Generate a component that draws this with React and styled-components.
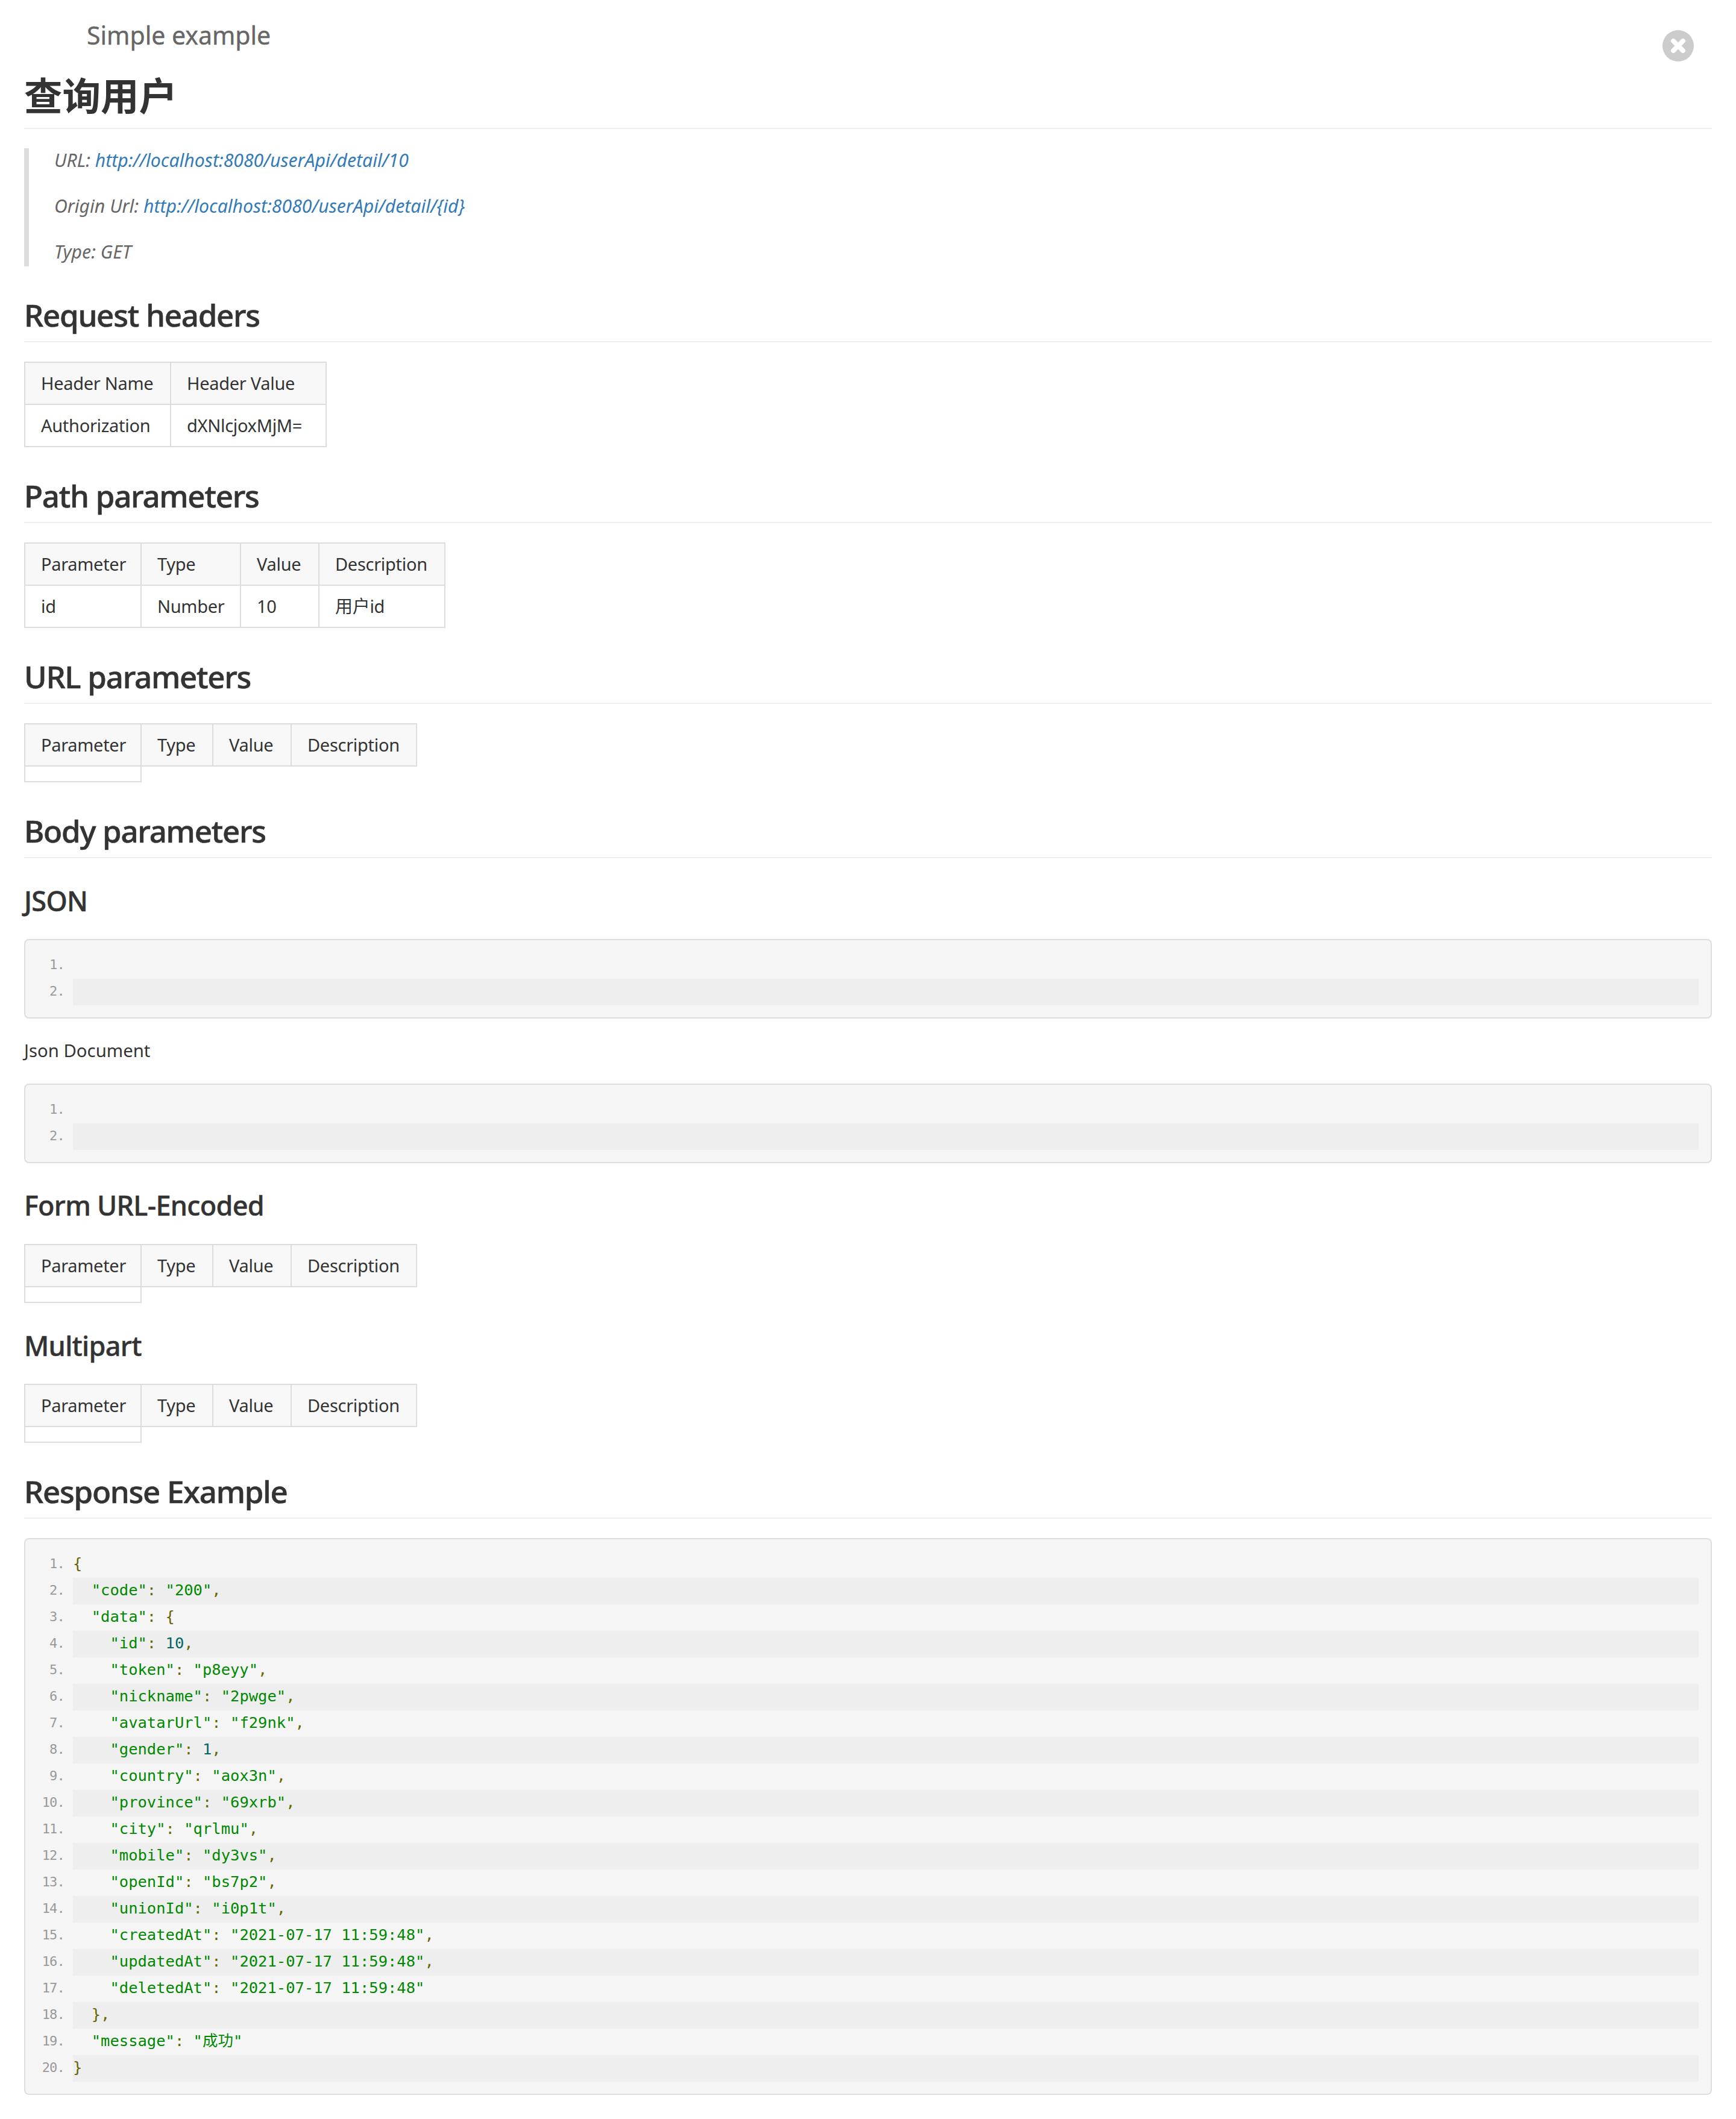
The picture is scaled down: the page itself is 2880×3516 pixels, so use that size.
import React from "react";
import styled, { createGlobalStyle } from "styled-components";

const Global = createGlobalStyle`
  html, body { margin: 0; padding: 0; background: #fff; }
  body { font-family: "Noto Sans", "Noto Sans CJK SC", sans-serif; color: #333; }
`;

const Page = styled.div`
  position: relative;
  width: 2880px;
  box-sizing: border-box;
  padding: 0 40px 40px;
`;

const Title = styled.div`
  margin-left: 104px;
  padding-top: 30px;
  height: 56px;
  font-size: 41px;
  line-height: 56px;
  color: #666;
  -webkit-text-stroke: 0.4px #666;
`;

const CloseIcon = styled.svg`
  position: absolute;
  top: 50px;
  right: 70px;
  width: 52px;
  height: 52px;
`;

const H1 = styled.h1`
  margin: 0 0 32px;
  padding-top: 33px;
  height: 93px;
  border-bottom: 2px solid #eee;
  font-size: 63.5px;
  line-height: 80px;
  font-weight: 700;
  color: #333;
`;

const Quote = styled.blockquote`
  margin: 0;
  padding: 0 0 0 42px;
  height: 196px;
  border-left: 8px solid #ddd;
  font-style: italic;
  font-size: 30.2px;
  line-height: 40px;
  color: #666;
`;

const QuoteLine = styled.p`
  margin: 0 0 36px;
`;

const QuoteLink = styled.a`
  color: #337ab7;
  text-decoration: none;
`;

const H2 = styled.h2`
  margin: ${(p) => p.$top}px 0 32px;
  padding-bottom: 16px;
  border-bottom: 2px solid #eee;
  font-size: 51px;
  line-height: 56px;
  font-weight: 500;
  letter-spacing: -1.25px;
  color: #333;
  -webkit-text-stroke: 0.6px #333;
`;

const H3 = styled.h3`
  margin: ${(p) => p.$top}px 0 ${(p) => p.$bottom}px;
  font-size: 45px;
  line-height: 52px;
  font-weight: 500;
  letter-spacing: -0.7px;
  color: #333;
  -webkit-text-stroke: 0.5px #333;
`;

const Table = styled.table`
  border-collapse: collapse;
  table-layout: fixed;
  width: ${(p) => p.$width}px;
  font-size: 29px;
  line-height: 44px;
  letter-spacing: -0.3px;
  color: #333;
`;

const Th = styled.th`
  box-sizing: border-box;
  padding: 12px 26px;
  border: 2px solid #ddd;
  background: #f8f8f8;
  font-weight: 400;
  text-align: left;
  white-space: nowrap;
`;

const Td = styled.td`
  box-sizing: border-box;
  padding: 12px 26px;
  border: 2px solid #ddd;
  white-space: nowrap;
`;

const Pre = styled.pre`
  box-sizing: border-box;
  margin: 0;
  padding: 20px 20px 20px 0;
  border: 2px solid #ddd;
  border-radius: 8px;
  background: #f5f5f5;
  font-family: "DejaVu Sans Mono", "Noto Sans CJK SC", monospace;
  font-size: 25.5px;
  line-height: 41px;
`;

const Line = styled.div`
  display: flex;
  height: 44px;
`;

const LineNo = styled.span`
  flex: 0 0 79px;
  box-sizing: border-box;
  padding-right: 14px;
  text-align: right;
  font-size: 22px;
  letter-spacing: -0.8px;
  color: #999;
`;

const Code = styled.code`
  flex: 1;
  font: inherit;
  white-space: pre;
  background: ${(p) => (p.$even ? "#eee" : "transparent")};
`;

const Tok = styled.span`
  color: ${(p) => p.$color};
`;

const Note = styled.p`
  margin: 33px 0 35px;
  font-size: 29.3px;
  line-height: 40px;
  color: #333;
`;

const COLORS = { str: "#080", num: "#066", pun: "#660" };

function CodeLine({ text, index }) {
  const parts = [];
  const re = /("[^"]*")|(\d+)|([{}:,])|(\s+)/g;
  let m;
  while ((m = re.exec(text))) {
    if (m[1]) parts.push(<Tok key={m.index} $color={COLORS.str}>{m[1]}</Tok>);
    else if (m[2]) parts.push(<Tok key={m.index} $color={COLORS.num}>{m[2]}</Tok>);
    else if (m[3]) parts.push(<Tok key={m.index} $color={COLORS.pun}>{m[3]}</Tok>);
    else parts.push(m[4]);
  }
  return (
    <Line>
      <LineNo>{index + 1}.</LineNo>
      <Code $even={index % 2 === 1}>{parts}</Code>
    </Line>
  );
}

function CodeBlock({ lines }) {
  return (
    <Pre>
      {lines.map((t, i) => (
        <CodeLine key={i} text={t} index={i} />
      ))}
    </Pre>
  );
}

function DataTable({ columns, widths, rows }) {
  return (
    <Table $width={widths.reduce((a, b) => a + b, 0) + 2}>
      <colgroup>
        {widths.map((w, i) => (
          <col key={i} width={w} />
        ))}
      </colgroup>
      <thead>
        <tr>
          {columns.map((c) => (
            <Th key={c}>{c}</Th>
          ))}
        </tr>
      </thead>
      <tbody>
        {rows.map((r, i) => (
          <tr key={i}>
            {r.map((c, j) => (
              <Td key={j}>{c}</Td>
            ))}
          </tr>
        ))}
      </tbody>
    </Table>
  );
}

const PARAMS = ["Parameter", "Type", "Value", "Description"];
const EMPTY_W = [193, 119, 130, 208];
const RESPONSE = [
  "{",
  '  "code": "200",',
  '  "data": {',
  '    "id": 10,',
  '    "token": "p8eyy",',
  '    "nickname": "2pwge",',
  '    "avatarUrl": "f29nk",',
  '    "gender": 1,',
  '    "country": "aox3n",',
  '    "province": "69xrb",',
  '    "city": "qrlmu",',
  '    "mobile": "dy3vs",',
  '    "openId": "bs7p2",',
  '    "unionId": "i0p1t",',
  '    "createdAt": "2021-07-17 11:59:48",',
  '    "updatedAt": "2021-07-17 11:59:48",',
  '    "deletedAt": "2021-07-17 11:59:48"',
  "  },",
  '  "message": "成功"',
  "}",
];

export default function App() {
  return (
    <Page>
      <Global />
      <Title>Simple example</Title>
      <CloseIcon viewBox="0 0 52 52" aria-hidden="true">
        <circle cx="26" cy="26" r="26" fill="#ccc" />
        <path d="M18 18 L34 34 M34 18 L18 34" stroke="#fff" strokeWidth="8" strokeLinecap="round" />
      </CloseIcon>
      <H1>查询用户</H1>
      <Quote>
        <QuoteLine>
          URL: <QuoteLink>http://localhost:8080/userApi/detail/10</QuoteLink>
        </QuoteLine>
        <QuoteLine>
          Origin Url: <QuoteLink>http://localhost:8080/userApi/detail/{"{id}"}</QuoteLink>
        </QuoteLine>
        <QuoteLine>Type: GET</QuoteLine>
      </Quote>
      <H2 $top={52}>Request headers</H2>
      <DataTable columns={["Header Name", "Header Value"]} widths={[242, 258]} rows={[["Authorization", "dXNlcjoxMjM="]]} />
      <H2 $top={52}>Path parameters</H2>
      <DataTable columns={PARAMS} widths={[193, 165, 130, 209]} rows={[["id", "Number", "10", "用户id"]]} />
      <H2 $top={52}>URL parameters</H2>
      <DataTable columns={PARAMS} widths={EMPTY_W} rows={[[""]]} />
      <H2 $top={52}>Body parameters</H2>
      <H3 $top={45} $bottom={37}>JSON</H3>
      <CodeBlock lines={["", ""]} />
      <Note>Json Document</Note>
      <CodeBlock lines={["", ""]} />
      <H3 $top={44} $bottom={38}>Form URL-Encoded</H3>
      <DataTable columns={PARAMS} widths={EMPTY_W} rows={[[""]]} />
      <H3 $top={45} $bottom={37}>Multipart</H3>
      <DataTable columns={PARAMS} widths={EMPTY_W} rows={[[""]]} />
      <H2 $top={52}>Response Example</H2>
      <CodeBlock lines={RESPONSE} />
    </Page>
  );
}
